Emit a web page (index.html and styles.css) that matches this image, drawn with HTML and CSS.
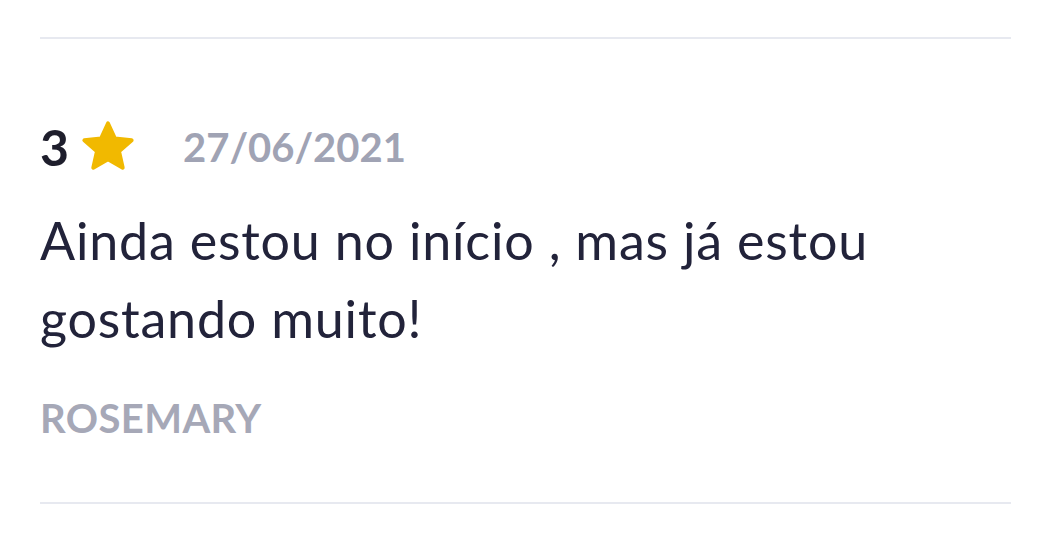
FILE: index.html
```html
<!DOCTYPE html>
<html lang="pt">
<head>
<meta charset="utf-8">
<link rel="stylesheet" href="styles.css">
</head>
<body>
<div class="review">
  <div class="head">
    <span class="rating">3</span>
    <svg class="star" viewBox="0 0 24 24" width="58" height="58"><path d="M12 2.2l2.9 6.3 6.9.7-5.2 4.6 1.5 6.8L12 17.1l-6.1 3.5 1.5-6.8L2.2 9.2l6.9-.7z" fill="#f1b900" stroke="#f1b900" stroke-width="1.6" stroke-linejoin="round"/></svg>
    <span class="date">27/06/2021</span>
  </div>
  <p class="text">Ainda estou no início , mas já estou<br>gostando muito!</p>
  <div class="author">ROSEMARY</div>
</div>
</body>
</html>
```
FILE: styles.css
```css
html, body { margin: 0; padding: 0; background: #fff; }
body { font-family: Lato, "Open Sans", sans-serif; }
.review {
  margin: 37px 40px 0;
  border-top: 2px solid #e7e9f0;
  border-bottom: 2px solid #e7e9f0;
  padding: 78px 0 60px;
}
.head { display: flex; align-items: center; height: 60px; }
.rating { font-size: 50px; font-weight: 700; color: #1e1e2c; }
.star { margin-left: 10px; }
.date { margin-left: 46px; font-size: 40px; font-weight: 700; color: #a0a3b4; }
.text { margin: 24px 0 0; font-size: 52px; line-height: 78px; letter-spacing: 0.8px; color: #22233a; }
.author { margin-top: 37px; font-size: 40px; font-weight: 700; letter-spacing: 0.4px; color: #a6a8b7; }
```
